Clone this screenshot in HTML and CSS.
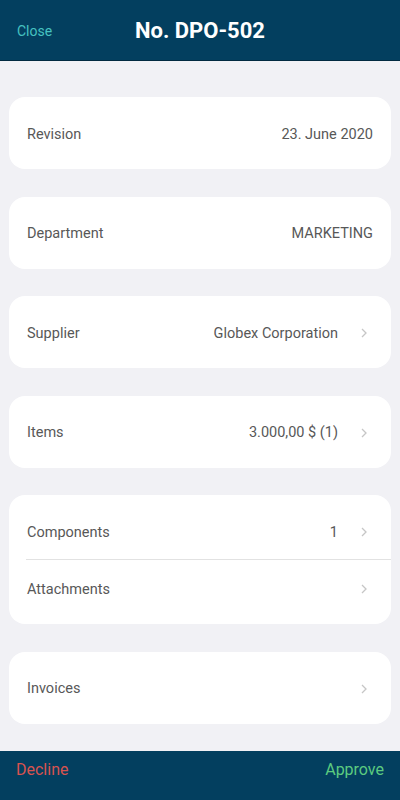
FILE: index.html
```html
<!DOCTYPE html>
<html>
<head>
<meta charset="utf-8">
<link rel="stylesheet" href="styles.css">
</head>
<body>
<div class="screen">
  <header class="topbar">
    <span class="close">Close</span>
    <h1 class="title">No. DPO-502</h1>
  </header>
  <main class="content">
    <section class="card">
      <div class="row"><span class="label">Revision</span><span class="value">23. June 2020</span></div>
    </section>
    <section class="card">
      <div class="row"><span class="label">Department</span><span class="value">MARKETING</span></div>
    </section>
    <section class="card">
      <div class="row link"><span class="label">Supplier</span><span class="value">Globex Corporation</span><svg class="chev" viewBox="0 0 6 10" width="6" height="10"><path d="M1 1 L5 5 L1 9" fill="none" stroke="#c6c6c6" stroke-width="1.3"/></svg></div>
    </section>
    <section class="card">
      <div class="row link"><span class="label">Items</span><span class="value">3.000,00 $ (1)</span><svg class="chev" viewBox="0 0 6 10" width="6" height="10"><path d="M1 1 L5 5 L1 9" fill="none" stroke="#c6c6c6" stroke-width="1.3"/></svg></div>
    </section>
    <section class="card">
      <div class="row link sep"><span class="label">Components</span><span class="value">1</span><svg class="chev" viewBox="0 0 6 10" width="6" height="10"><path d="M1 1 L5 5 L1 9" fill="none" stroke="#c6c6c6" stroke-width="1.3"/></svg></div>
      <div class="row link"><span class="label">Attachments</span><span class="value"></span><svg class="chev" viewBox="0 0 6 10" width="6" height="10"><path d="M1 1 L5 5 L1 9" fill="none" stroke="#c6c6c6" stroke-width="1.3"/></svg></div>
    </section>
    <section class="card">
      <div class="row link"><span class="label">Invoices</span><span class="value"></span><svg class="chev" viewBox="0 0 6 10" width="6" height="10"><path d="M1 1 L5 5 L1 9" fill="none" stroke="#c6c6c6" stroke-width="1.3"/></svg></div>
    </section>
  </main>
  <footer class="bottombar">
    <span class="decline">Decline</span>
    <span class="approve">Approve</span>
  </footer>
</div>
</body>
</html>
```
FILE: styles.css
```css
* { box-sizing: border-box; }
html, body { margin: 0; padding: 0; }
body {
  font-family: Roboto, "Liberation Sans", sans-serif;
  background: #f1f1f5;
}
.screen {
  width: 400px;
  height: 800px;
  display: flex;
  flex-direction: column;
  background: #f1f1f5;
}
.topbar {
  height: 61px;
  flex: none;
  background: #033f5f;
  border-bottom: 1px solid #012a40;
  display: flex;
  align-items: center;
  justify-content: center;
  position: relative;
}
.close {
  position: absolute;
  left: 17px;
  top: 23px;
  font-size: 14px;
  color: #46c2c0;
}
.title {
  margin: 0;
  font-size: 22px;
  font-weight: 700;
  color: #ffffff;
  line-height: 26px;
  margin-top: 2px;
}
.content {
  flex: 1;
  padding: 36px 9px 0 9px;
  display: flex;
  flex-direction: column;
  gap: 27.6px;
}
.card {
  background: #ffffff;
  border-radius: 16px;
  padding: 8px 0;
}
.row {
  height: 56px;
  display: flex;
  align-items: center;
  padding: 2px 18px 0 18px;
  font-size: 14.5px;
  color: #585858;
}
.row.sep {
  height: 57px;
  border-bottom: 1px solid #e2e2e2;
  margin-left: 17px;
  padding-left: 1px;
}
.label { flex: 1; }
.value { text-align: right; }
.chev {
  margin-left: 23px;
  margin-right: 6px;
  display: block;
}
.bottombar {
  height: 49px;
  flex: none;
  background: #033f5f;
  display: flex;
  justify-content: space-between;
  align-items: center;
  padding: 0 16px 12px 16px;
  font-size: 16px;
}
.decline { color: #d9534f; }
.approve { color: #5ccb7f; }
```
